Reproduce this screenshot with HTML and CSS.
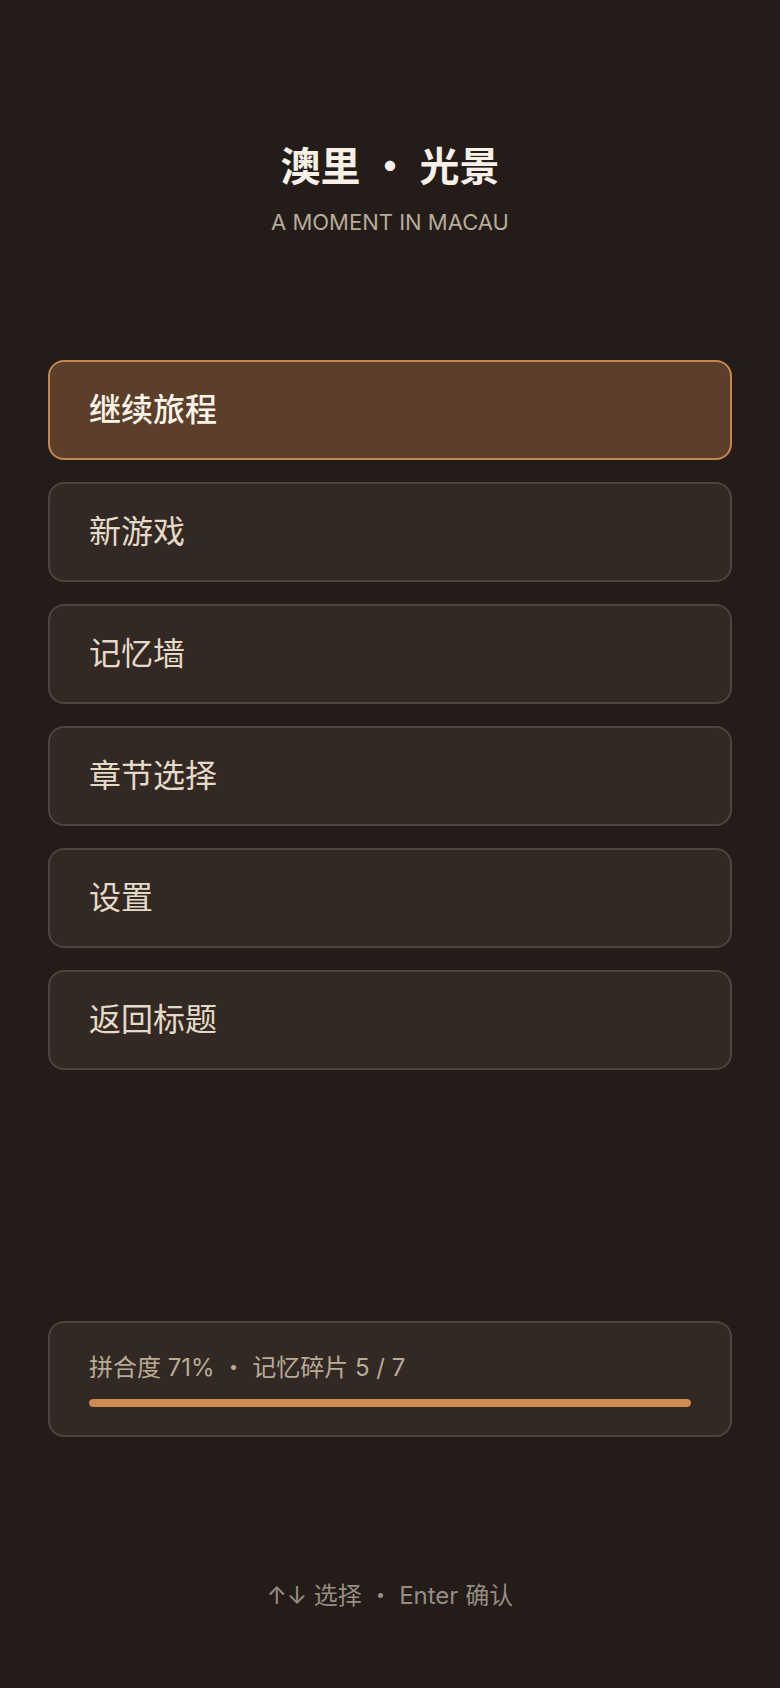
FILE: index.html
```html
<!DOCTYPE html>
<html lang="zh-CN">
<head>
<meta charset="utf-8">
<title>澳里 · 光景</title>
<link rel="stylesheet" href="styles.css">
</head>
<body>
<main class="screen">
  <header class="brand">
    <h1 class="title">澳里 ・ 光景</h1>
    <p class="subtitle">A MOMENT IN MACAU</p>
  </header>

  <nav class="menu">
    <button class="menu-item is-active">继续旅程</button>
    <button class="menu-item">新游戏</button>
    <button class="menu-item">记忆墙</button>
    <button class="menu-item">章节选择</button>
    <button class="menu-item">设置</button>
    <button class="menu-item">返回标题</button>
  </nav>

  <section class="progress-card">
    <p class="progress-text">拼合度 71% ・ 记忆碎片 5 / 7</p>
    <div class="progress-track"><div class="progress-fill" style="width:100%"></div></div>
  </section>

  <footer class="hint">↑↓ 选择 ・ Enter 确认</footer>
</main>
</body>
</html>
```

FILE: styles.css
```css
* { box-sizing: border-box; }

html, body {
  margin: 0;
  padding: 0;
  background: #231c18;
}

body {
  font-family: Inter, "Noto Sans CJK SC", sans-serif;
  color: #e6d9c6;
  min-height: 1688px;
}

.screen {
  display: flex;
  flex-direction: column;
  padding: 0 48px;
}

.brand {
  display: flex;
  flex-direction: column;
  align-items: center;
  padding-top: 143px;
}

.title {
  margin: 0;
  font-size: 40px;
  line-height: 48px;
  font-weight: 700;
  color: #f8f0e6;
}

.subtitle {
  margin: 17px 0 0;
  font-size: 22px;
  line-height: 28px;
  font-weight: 400;
  color: #b8ab98;
}

.menu {
  display: flex;
  flex-direction: column;
  gap: 22px;
  margin-top: 124px;
}

.menu-item {
  display: flex;
  align-items: center;
  height: 100px;
  padding: 0 39px;
  border: 2px solid #4b4440;
  border-radius: 16px;
  background: #322924;
  color: #e6d9c6;
  font-family: inherit;
  font-size: 32px;
  line-height: 40px;
  font-weight: 400;
  text-align: left;
}

.menu-item.is-active {
  background: #5b3f2a;
  border-color: #c4874f;
  color: #fdf5ea;
  font-weight: 500;
}

.progress-card {
  margin-top: 251px;
  padding: 28px 39px 28px;
  border: 2px solid #4b4440;
  border-radius: 16px;
  background: #322924;
}

.progress-text {
  margin: 0;
  font-size: 24px;
  line-height: 34px;
  color: #b9ab94;
}

.progress-track {
  margin-top: 14px;
  height: 8px;
  border-radius: 4px;
  background: #4a3a2e;
  overflow: hidden;
}

.progress-fill {
  height: 100%;
  border-radius: 4px;
  background: #d08b50;
}

.hint {
  margin-top: 143px;
  text-align: center;
  font-size: 24px;
  line-height: 32px;
  color: #978c80;
}
```
